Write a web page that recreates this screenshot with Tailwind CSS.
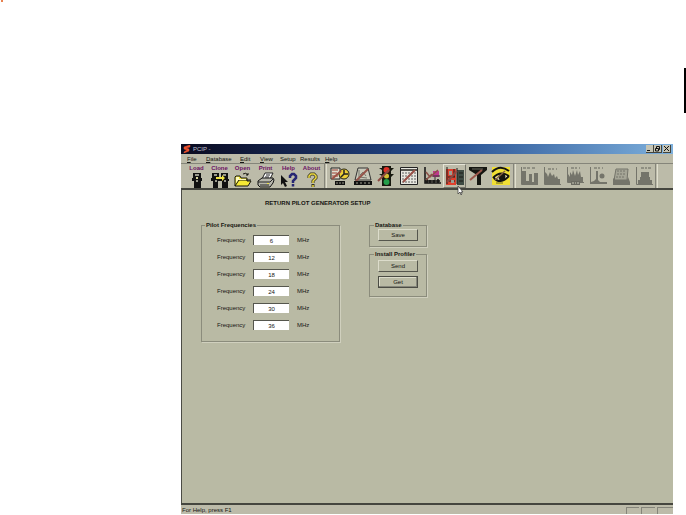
<!doctype html>
<html lang="en">
  <head>
    <meta charset="UTF-8" />
    <meta name="viewport" content="width=device-width, initial-scale=1.0" />
    <title>PCIP - Return Pilot Generator Setup</title>
    <script src="https://cdn.jsdelivr.net/npm/@tailwindcss/browser@4"></script>
  </head>
  <body
    class="relative flex min-h-screen flex-col bg-white pt-36 pr-[13px] pb-px pl-[181px] font-['Liberation_Sans',sans-serif] text-[6px] leading-[8px] text-[#161612]"
  >
    <!-- Page marks -->
    <div class="absolute top-0 left-px size-0.5 bg-[#e8814f]"></div>
    <div class="absolute top-[68px] right-0 h-[45px] w-0.5 bg-black"></div>

    <div class="flex flex-1 flex-col bg-[#b9baa4]">
      <!-- Title bar -->
      <header
        class="flex h-[10px] items-center bg-linear-to-r from-[#0a0b20] via-[#22498c] via-50% to-[#7eb0dc] pr-0.5 pl-0.5 text-[#c3c5d4]"
      >
        <svg class="mr-0.5 size-2" viewBox="0 0 8 8">
          <path d="M7 0 1 2v2l3 1-3 2v1l5-2V4L3 3l4-1z" fill="#f0512d" stroke="#f0512d" stroke-width=".5" />
        </svg>
        <h1>PCIP -</h1>
        <div class="ml-auto flex">
          <button aria-label="Minimize" class="h-2 w-2 border-r border-b border-[#44443c] bg-[#c5c4b4]">
            <svg class="size-full" viewBox="0 0 7 7"><path d="M1 5h3v1H1z" fill="#111" /></svg>
          </button>
          <button aria-label="Restore" class="h-2 w-2 border-r border-b border-[#44443c] bg-[#c5c4b4]">
            <svg class="size-full" viewBox="0 0 7 7">
              <path d="M2.5 3V1.5h3v3H4.5M1.5 3.5h3v2.5h-3z" fill="none" stroke="#111" />
            </svg>
          </button>
          <button aria-label="Close" class="ml-px h-2 w-2 border-r border-b border-[#44443c] bg-[#c5c4b4]">
            <svg class="size-full" viewBox="0 0 7 7"><path d="m1 1 5 5M6 1 1 6" stroke="#111" /></svg>
          </button>
        </div>
      </header>

      <!-- Menu -->
      <nav class="grid h-[9px] grid-cols-[19px_34px_20px_20px_20px_25px_auto] items-center bg-[#bcbba9] pl-1.5">
        <a href="#"><u>F</u>ile</a>
        <a href="#"><u>D</u>atabase</a>
        <a href="#"><u>E</u>dit</a>
        <a href="#"><u>V</u>iew</a>
        <a href="#">Setup</a>
        <a href="#">Results</a>
        <a href="#"><u>H</u>elp</a>
      </nav>

      <!-- Toolbar -->
      <div class="flex h-[27px] border-t border-b-2 border-t-[#85857a] border-b-[#45463f] bg-[#bcbba9] pl-1 font-bold text-[#6c1264]">
        <div class="flex">
          <button class="flex w-[23px] flex-col items-center pt-px">
            <span class="leading-[7px]">Load</span>
            <svg class="h-4 w-5" viewBox="0 0 20 16">
              <path d="M6 1h8v5h1v3h-1v7H7V9H5V6h1z" fill="#111" />
              <path d="M8 2h4v2H8zM9 8h2v2H9z" fill="#99998d" />
              <path d="M9 5h2v2H9z" fill="#d8d6a0" />
            </svg>
          </button>
          <button class="flex w-[23px] flex-col items-center pt-px">
            <span class="leading-[7px]">Clone</span>
            <svg class="h-4 w-5" viewBox="0 0 20 16">
              <path d="M2 1h7v4h2V1h7v6h1v2h-1v7h-6V9H8v7H3V9H1V6h1z" fill="#111" />
              <path d="M4 2h3v2H4zM13 2h3v2h-3zM5 8h2v2H5zM14 8h2v2h-2z" fill="#99998d" />
              <path d="M6 5h6V3l3 3-3 3V7H6z" fill="#f0e546" />
            </svg>
          </button>
          <button class="flex w-[23px] flex-col items-center pt-px">
            <span class="leading-[7px]">Open</span>
            <svg class="h-4 w-5" viewBox="0 0 20 16">
              <path d="M2 14V5l1-1h4l1 2h6v3h4l-3 5H2z" fill="#f5e934" stroke="#171710" />
              <path d="m2 14 4-6h12M10 2q3-2 5 1m0 0V1m0 2h-2" fill="none" stroke="#171710" />
              <path d="M3 5h3v2h7v1H5l-2 3z" fill="#fffbc0" />
            </svg>
          </button>
          <button class="flex w-[23px] flex-col items-center pt-px">
            <span class="leading-[7px]">Print</span>
            <svg class="h-4 w-5" viewBox="0 0 20 16">
              <path d="m6 7 3-6h8l-3 6z" fill="#fff" stroke="#222" />
              <path d="m2 9 4-3h11l1 2-1 3-3 4H4l-2-2z" fill="#b7b7ac" stroke="#111" />
              <path d="M2 10h12l3-3M10 3h4M9 5h4M4 13h9" fill="none" stroke="#222" />
              <path d="M11 11h2v1h-2z" fill="#eee044" />
            </svg>
          </button>
          <button class="flex w-[23px] flex-col items-center pt-px">
            <span class="leading-[7px]">Help</span>
            <svg class="h-4 w-5" viewBox="0 0 20 16">
              <path d="m2 3 7 7H6l2 4-2 1-2-4-2 2z" fill="#111" />
              <path d="M11 6V4l2-2h2l2 2v2l-3 3v2M14 12v2.5" fill="none" stroke="#272773" stroke-width="2.5" />
            </svg>
          </button>
          <button class="flex w-[23px] flex-col items-center pt-px">
            <span class="leading-[7px]">About</span>
            <svg class="h-4 w-5" viewBox="0 0 20 16">
              <path d="M7 6V4l2-2h3l2 2v2l-3 3v2M11 12v3" fill="none" stroke="#35331b" stroke-width="3" />
              <path d="M7 6V4l2-2h3l2 2v2l-3 3v2M11 13v2" fill="none" stroke="#f0dd42" stroke-width="1.5" />
            </svg>
          </button>
        </div>

        <div class="mx-px w-[3px] border-x border-l-[#85857a] border-r-[#e0dfcf]"></div>

        <div class="flex items-center">
          <button aria-label="Schedule" class="w-[23px]">
            <svg class="mx-auto size-5" viewBox="0 0 20 20">
              <path d="M1 2h9v11H1z" fill="#deddcf" stroke="#222" />
              <path d="M2 4h6M2 7h5M2 10h6" stroke="#9c3f32" />
              <circle cx="14" cy="8" r="5" fill="#edcf36" stroke="#25230f" />
              <path d="M14 4v4h4M11 11l3-3" fill="none" stroke="#222" stroke-width="1.500" />
              <path d="m2 13 9-8" stroke="#9d5145" stroke-width="2" />
              <path d="M5 15h10v4H5z" fill="#111" />
              <path d="M6 17h2m1 0h2m1 0h2" stroke="#99998b" />
            </svg>
          </button>
          <button aria-label="Level" class="w-[23px]">
            <svg class="mx-auto size-5" viewBox="0 0 20 20">
              <path d="m2 14 3-12h10l3 12z" fill="#c9c9ba" stroke="#333" />
              <path d="M6 4v7l8 1M7 9l3-3 3 4" fill="none" stroke="#77776d" />
              <path d="m3 15 12-12" stroke="#955349" stroke-width="2" />
              <path d="M1 15h18v4H1z" fill="#111" />
              <path d="M3 17h2m2 0h2m2 0h2m2 0h2" stroke="#a0a090" />
            </svg>
          </button>
          <button aria-label="Limits" class="w-[23px]">
            <svg class="mx-auto size-5" viewBox="0 0 20 20">
              <path d="M6 0h9v20H6zM3 2h3v2zM3 8h3v2zM15 2h3l-3 3zM15 8h3l-3 3z" fill="#17180f" />
              <circle cx="10.5" cy="4" r="3" fill="#df3026" />
              <circle cx="10.5" cy="10" r="2.5" fill="#d4bd32" />
              <circle cx="10.5" cy="16" r="3" fill="#249e4a" />
              <path d="m2 15 11-11" stroke="#8d4a42" stroke-width="2" />
            </svg>
          </button>
          <button aria-label="Channel plan" class="w-[23px]">
            <svg class="mx-auto size-5" viewBox="0 0 20 20">
              <path d="M1.5 1.5h17v17h-17z" fill="#e7e7df" stroke="#222" />
              <path d="M2 4h16" stroke="#55554f" stroke-width="2" />
              <path d="M4 6v11M7 6v11M10 6v11M13 6v11M16 6v11" stroke="#5c5c5c" stroke-dasharray="2 1" />
              <path d="m4 16 12-12" stroke="#995047" stroke-width="2" />
            </svg>
          </button>
          <button aria-label="Sweep points" class="w-[23px]">
            <svg class="mx-auto size-5" viewBox="0 0 20 20">
              <path d="M3 1v16h16M3 15h15M5 12v5M8 14v3M12 14v3M16 13v4" fill="none" stroke="#111" stroke-width="1.5" />
              <path d="M11 5h6v6h-6z" fill="#bd398c" />
              <path d="M10 10h8M13 11v3" stroke="#333" />
              <path d="m4 6 4 5 8-7M4 14l6-6" fill="none" stroke="#8c5147" stroke-width="1.5" />
            </svg>
          </button>
          <button aria-label="Pilot generator" class="h-full w-[23px] border border-t-[#e5e4d6] border-r-[#76766b] border-b-[#76766b] border-l-[#e5e4d6]">
            <svg class="mx-auto size-5" viewBox="0 0 20 20">
              <path d="M1 3h10v16H1z" fill="#df402e" />
              <path d="M12 4h7v15h-7z" fill="#3e4b43" />
              <path d="M2 1v17M5 5v4M9 3v8M3 11h7M4 15h6M12 2v16M14 7h4M14 11h4M14 15h4" stroke="#1d1c18" />
              <path d="M4 5h3v4H4zM6 14h3v3H6z" fill="#9c9c92" />
              <path d="m2 16 10-11" stroke="#8b4943" stroke-width="2" />
            </svg>
          </button>
          <button aria-label="Filter" class="w-[23px]">
            <svg class="mx-auto size-5" viewBox="0 0 20 20">
              <path d="M1 1h18v3l-6 5v10H9V9L1 4z" fill="#151611" />
              <path d="M4 3h11" stroke="#66665d" />
              <path d="m2 14 12-10" stroke="#9b574b" stroke-width="2" />
            </svg>
          </button>
          <button aria-label="Monitor" class="w-[23px]">
            <svg class="mx-auto size-5" viewBox="0 0 20 20">
              <path d="M1 1h18v18H1z" fill="#f0df34" />
              <path d="M1 6q8-8 17-1M2 12q7-8 16-2M3 12q6 7 15-2" fill="none" stroke="#111" stroke-width="2" />
              <path d="M4 12q6-6 12-2-4 7-12 2z" fill="#f0eee1" />
              <circle cx="11" cy="11" r="3.5" fill="#17170f" />
              <path d="m4 14 10-9" stroke="#846043" stroke-width="1.5" />
              <path d="M5 17h7" stroke="#6b6421" />
            </svg>
          </button>
        </div>

        <div class="mx-px w-[3px] border-x border-l-[#85857a] border-r-[#e0dfcf]"></div>

        <div class="flex items-center">
          <button disabled aria-label="Level results" class="w-[23px]">
            <svg class="mx-auto size-5" viewBox="0 0 20 20">
              <path d="M4 2h3m1 0h3m2 0h3" stroke="#8f8f82" stroke-width="2" />
              <path d="M3 18V5h4v10h3V8h3v8h2V7h4v11z" fill="#74746a" />
              <path d="M2.5 1v17.5H19" fill="none" stroke="#74746a" />
            </svg>
          </button>
          <button disabled aria-label="Scan results" class="w-[23px]">
            <svg class="mx-auto size-5" viewBox="0 0 20 20">
              <path d="M6 3h3m1 0h2m2 0h1" stroke="#8f8f82" stroke-width="2" />
              <path d="M3 18V6l2 2 1 3 2-5 2 4 2-2 1 4 2-2 1 3h2v5z" fill="#74746a" />
              <path d="M2.5 1v17.5H19" fill="none" stroke="#74746a" />
            </svg>
          </button>
          <button disabled aria-label="Sweep results" class="w-[23px]">
            <svg class="mx-auto size-5" viewBox="0 0 20 20">
              <path d="M6 2h3m1 0h2m2 0h1" stroke="#8f8f82" stroke-width="2" />
              <path d="M3 16V8l2 3V6l2 3 1-5 2 6 2-6 1 5 2-4 1 6h2v5z" fill="#74746a" />
              <path d="M2.5 1v15.5H19" fill="none" stroke="#74746a" />
              <path d="M6 15h9v4H6z" fill="#6a6a61" />
              <path d="M7 17h2m1 0h1m1 0h2" stroke="#c8c8b8" />
            </svg>
          </button>
          <button disabled aria-label="Distortion results" class="w-[23px]">
            <svg class="mx-auto size-5" viewBox="0 0 20 20">
              <path d="M6 2h3m1 0h2m2 0h1" stroke="#8f8f82" stroke-width="2" />
              <path d="M2 1h1v15l3-1 2-2V5h2v9l2 2h7v2H2z" fill="#74746a" />
              <circle cx="14" cy="10" r="2.5" fill="#74746a" />
            </svg>
          </button>
          <button disabled aria-label="Pattern results" class="w-[23px]">
            <svg class="mx-auto size-5" viewBox="0 0 20 20">
              <path d="M5 3h12l-1 11H3z" fill="#a5a596" stroke="#74746a" />
              <path d="M6 5h9M6 8h9M5 11h9" stroke="#74746a" stroke-dasharray="2 1" />
              <path d="m2 13 2-2v3h12l1-3 2 5v3H2z" fill="#74746a" />
            </svg>
          </button>
          <button disabled aria-label="Spectrum results" class="w-[23px]">
            <svg class="mx-auto size-5" viewBox="0 0 20 20">
              <path d="M7 2h3m1 0h2m1 0h3" stroke="#8f8f82" stroke-width="2" />
              <path d="M4 18v-4h2v-3h1V6h8v5h1v3h2v4z" fill="#74746a" />
              <path d="M2.5 1v17.5H19" fill="none" stroke="#74746a" />
            </svg>
          </button>
        </div>

        <div class="w-[3px] border-x border-l-[#85857a] border-r-[#e0dfcf]"></div>
      </div>

      <!-- Pointer -->
      <svg class="absolute top-[185px] left-[457px] h-[11px] w-[7px]" viewBox="0 0 7 11">
        <path d="M1 1v8l2-2 1 3 1-1-1-2h2z" fill="#fff" stroke="#333" stroke-width=".7" />
      </svg>

      <!-- Setup form -->
      <main class="flex-1 border-l border-[#4b4c45] px-[19px] pt-[9px]">
        <h2 class="pl-16 font-bold">RETURN PILOT GENERATOR SETUP</h2>

        <form class="mt-3.5 flex items-start gap-[29px]">
          <fieldset class="h-[121px] w-[139px] border border-[#8b8c7c] pl-[15px] shadow-[1px_1px_0_#d0d0be]">
            <legend class="-ml-3 px-px font-bold">Pilot Frequencies</legend>
            <div class="mt-[6px] grid auto-rows-[10px] grid-cols-[36px_36px_auto] items-center gap-y-[7px]">
              <label for="f1">Frequency</label>
              <input id="f1" value="6" class="h-[10px] w-9 border-t border-l border-[#55564d] bg-white text-center" />
              <span class="pl-2">MHz</span>
              <label for="f2">Frequency</label>
              <input id="f2" value="12" class="h-[10px] w-9 border-t border-l border-[#55564d] bg-white text-center" />
              <span class="pl-2">MHz</span>
              <label for="f3">Frequency</label>
              <input id="f3" value="18" class="h-[10px] w-9 border-t border-l border-[#55564d] bg-white text-center" />
              <span class="pl-2">MHz</span>
              <label for="f4">Frequency</label>
              <input id="f4" value="24" class="h-[10px] w-9 border-t border-l border-[#55564d] bg-white text-center" />
              <span class="pl-2">MHz</span>
              <label for="f5">Frequency</label>
              <input id="f5" value="30" class="h-[10px] w-9 border-t border-l border-[#55564d] bg-white text-center" />
              <span class="pl-2">MHz</span>
              <label for="f6">Frequency</label>
              <input id="f6" value="36" class="h-[10px] w-9 border-t border-l border-[#55564d] bg-white text-center" />
              <span class="pl-2">MHz</span>
            </div>
          </fieldset>

          <div class="flex flex-col gap-[3px]">
            <fieldset class="h-[26px] w-[58px] border border-[#8b8c7c] px-2 shadow-[1px_1px_0_#d0d0be]">
              <legend class="-ml-1 px-px font-bold">Database</legend>
              <button type="button" class="block h-3 w-full border border-t-[#dcdccb] border-r-[#55564d] border-b-[#55564d] border-l-[#dcdccb]">Save</button>
            </fieldset>
            <fieldset class="h-[47px] w-[58px] border border-[#8b8c7c] px-2 shadow-[1px_1px_0_#d0d0be]">
              <legend class="-mx-1 px-px font-bold whitespace-nowrap">Install Profiler</legend>
              <button type="button" class="mt-0.5 block h-3 w-full border border-t-[#dcdccb] border-r-[#55564d] border-b-[#55564d] border-l-[#dcdccb]">Send</button>
              <button type="button" class="mt-1 block h-3 w-full border border-[#4b4c44] shadow-[inset_-1px_-1px_0_#85867a,inset_1px_1px_0_#dcdccb]">Get</button>
            </fieldset>
          </div>
        </form>
      </main>

      <!-- Status bar -->
      <footer class="flex h-[11px] items-end border-t-2 border-[#45463f] bg-[#bcbba9] pl-px">
        <span>For Help, press F1</span>
        <div class="ml-auto flex gap-0.5">
          <div class="h-[7px] w-[13px] border-t border-l border-[#85857a]"></div>
          <div class="h-[7px] w-[14px] border-t border-l border-[#85857a]"></div>
          <div class="h-[7px] w-4 border-t border-l border-[#85857a]"></div>
        </div>
      </footer>
    </div>
  </body>
</html>
